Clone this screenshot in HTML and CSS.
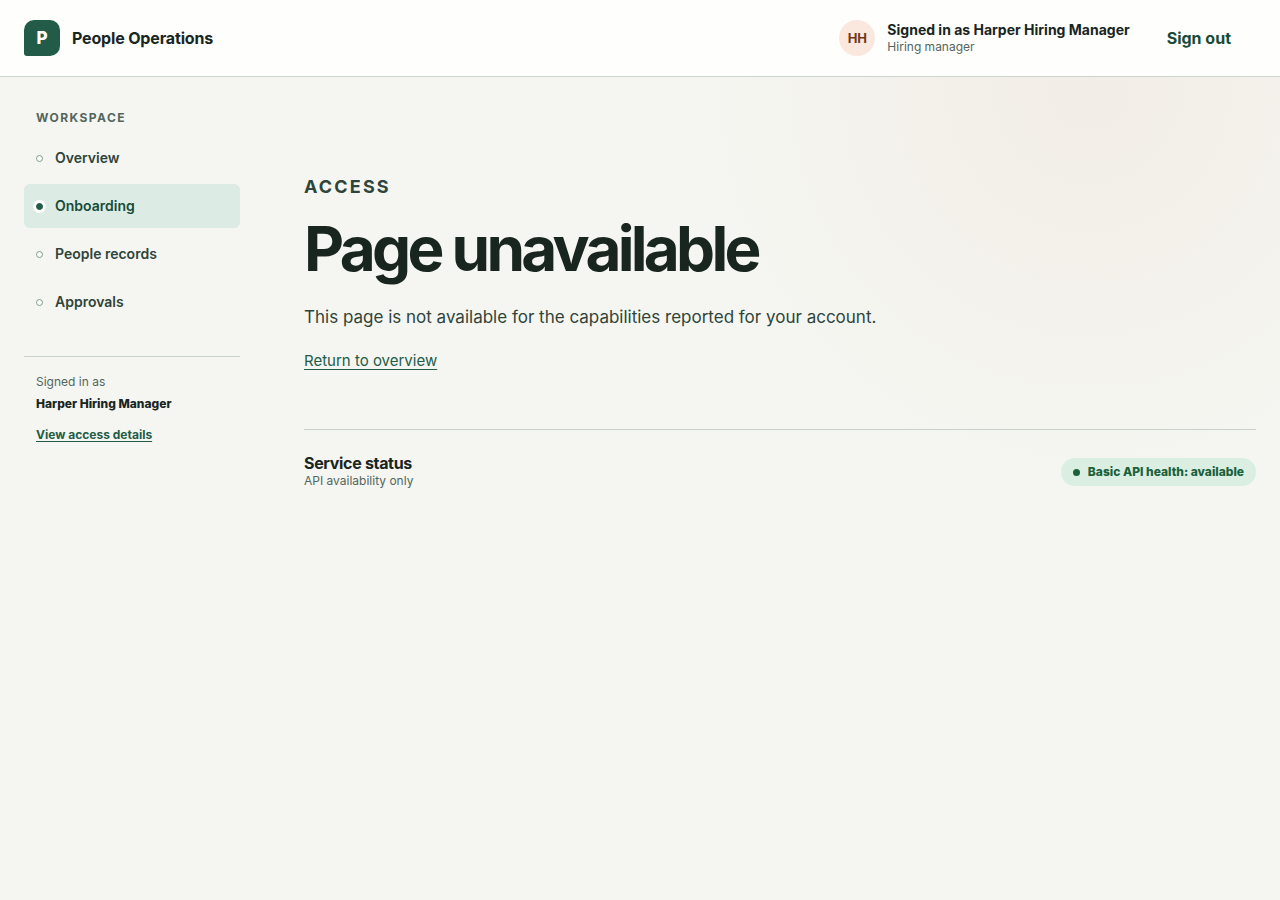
FILE: index.html
```html
<!DOCTYPE html>
<html lang="en">
<head>
<meta charset="utf-8">
<meta name="viewport" content="width=device-width, initial-scale=1">
<title>Page unavailable – People Operations</title>
<link rel="stylesheet" href="styles.css">
</head>
<body>
<header class="topbar">
  <div class="brand">
    <span class="brand-mark" aria-hidden="true">P</span>
    <span class="brand-name">People Operations</span>
  </div>
  <div class="account">
    <span class="avatar" aria-hidden="true">HH</span>
    <div class="account-text">
      <strong class="account-name">Signed in as Harper Hiring Manager</strong>
      <span class="account-role">Hiring manager</span>
    </div>
    <button class="sign-out" type="button">Sign out</button>
  </div>
</header>
<div class="shell">
  <aside class="sidebar">
    <p class="nav-label">Workspace</p>
    <nav class="nav" aria-label="Workspace">
      <a class="nav-link" href="#overview"><span class="nav-dot"></span>Overview</a>
      <a class="nav-link is-active" href="#onboarding" aria-current="page"><span class="nav-dot"></span>Onboarding</a>
      <a class="nav-link" href="#records"><span class="nav-dot"></span>People records</a>
      <a class="nav-link" href="#approvals"><span class="nav-dot"></span>Approvals</a>
    </nav>
    <div class="identity">
      <span class="identity-label">Signed in as</span>
      <strong class="identity-name">Harper Hiring Manager</strong>
      <a class="identity-link" href="#access">View access details</a>
    </div>
  </aside>
  <main class="content">
    <section class="notice">
      <p class="eyebrow">Access</p>
      <h1 class="title">Page unavailable</h1>
      <p class="lead">This page is not available for the capabilities reported for your account.</p>
      <a class="return-link" href="#overview">Return to overview</a>
    </section>
    <section class="status">
      <div class="status-text">
        <h2 class="status-title">Service status</h2>
        <span class="status-note">API availability only</span>
      </div>
      <span class="badge"><span class="badge-dot"></span>Basic API health: available</span>
    </section>
  </main>
</div>
</body>
</html>
```
FILE: styles.css
```css
* {
  box-sizing: border-box;
}

body {
  margin: 0;
  min-height: 100vh;
  font-family: Inter, "Liberation Sans", sans-serif;
  font-size: 16px;
  line-height: 24px;
  color: #19251f;
  background: radial-gradient(circle at 85% 10%, rgba(230, 200, 185, 0.2), transparent 384px) #f5f6f1;
}

h1, h2, p {
  margin: 0;
}

.topbar {
  display: flex;
  align-items: center;
  justify-content: space-between;
  min-height: 77px;
  padding: 16px 24px;
  background: #fefefd;
  border-bottom: 1px solid #c9d5ce;
}

.brand {
  display: flex;
  align-items: center;
  gap: 12px;
}

.brand-mark {
  display: grid;
  place-items: center;
  width: 36px;
  height: 36px;
  border-radius: 10px 10px 10px 3px;
  background: #225c48;
  color: #fff;
  font-size: 17px;
  font-weight: 800;
}

.brand-name {
  font-weight: 700;
  letter-spacing: -0.01em;
}

.account {
  display: flex;
  align-items: center;
  gap: 12px;
}

.avatar {
  display: grid;
  place-items: center;
  width: 36px;
  height: 36px;
  border-radius: 50%;
  background: #fae8de;
  color: #743719;
  font-size: 13px;
  font-weight: 700;
}

.account-text {
  display: flex;
  flex-direction: column;
}

.account-name {
  font-size: 14px;
  line-height: 18px;
  font-weight: 700;
}

.account-role {
  font-size: 12px;
  line-height: 16px;
  color: #53665d;
}

.sign-out {
  min-height: 44px;
  padding: 8px 25px;
  border: 0;
  background: none;
  color: #174b38;
  font: inherit;
  font-weight: 700;
  cursor: pointer;
}

.shell {
  display: grid;
  grid-template-columns: 216px minmax(0, 1fr);
  gap: 64px;
  padding: 32px 24px;
}

.nav-label {
  padding: 0 12px;
  margin-bottom: 9px;
  font-size: 12px;
  line-height: 18px;
  font-weight: 700;
  letter-spacing: 0.12em;
  text-transform: uppercase;
  color: #53665d;
}

.nav {
  display: grid;
  gap: 4px;
}

.nav-link {
  display: flex;
  align-items: center;
  gap: 12px;
  min-height: 44px;
  padding: 8px 12px;
  border-radius: 6px;
  color: #2f443a;
  font-size: 14px;
  font-weight: 600;
  text-decoration: none;
}

.nav-dot {
  width: 7px;
  height: 7px;
  border: 1px solid #829a8e;
  border-radius: 50%;
  background: #fefefd;
}

.is-active {
  background: #dcebe4;
  color: #174b38;
}

.is-active .nav-dot {
  border-color: #225c48;
  background: #225c48;
  box-shadow: 0 0 0 3px #fff;
}

.identity {
  display: flex;
  flex-direction: column;
  align-items: flex-start;
  margin-top: 32px;
  padding: 16px 12px;
  border-top: 1px solid #c9d1cb;
  font-size: 12px;
  line-height: 18px;
}

.identity-label {
  color: #53665d;
}

.identity-name {
  margin: 4px 0 13px;
  font-weight: 800;
}

.identity-link {
  color: #225c48;
  font-weight: 700;
  text-underline-offset: 2px;
}

.notice {
  padding: 64px 0 56px;
}

.eyebrow {
  font-size: 18px;
  line-height: 28px;
  font-weight: 700;
  letter-spacing: 0.12em;
  text-transform: uppercase;
  color: #2f443a;
}

.title {
  margin: 16px 0 22px;
  font-size: 62px;
  line-height: 64px;
  font-weight: 700;
  letter-spacing: -0.06em;
}

.lead {
  margin-bottom: 17px;
  font-size: 17px;
  line-height: 28px;
  color: #2f443a;
}

.return-link {
  font-size: 15px;
  color: #225c48;
  text-underline-offset: 3px;
}

.status {
  display: flex;
  align-items: center;
  justify-content: space-between;
  gap: 16px;
  padding: 24px 0;
  border-top: 1px solid #c9d1cb;
}

.status-text {
  display: flex;
  flex-direction: column;
}

.status-title {
  font-size: 16px;
  line-height: 18px;
  font-weight: 700;
  letter-spacing: -0.02em;
}

.status-note {
  font-size: 12px;
  line-height: 18px;
  color: #53665d;
}

.badge {
  display: inline-flex;
  align-items: center;
  gap: 8px;
  min-height: 28px;
  padding: 4px 12px;
  border-radius: 14px;
  background: #daeee2;
  color: #1b613b;
  font-size: 12px;
  line-height: 18px;
  font-weight: 800;
}

.badge-dot {
  width: 7px;
  height: 7px;
  border-radius: 50%;
  background: currentColor;
}
```
